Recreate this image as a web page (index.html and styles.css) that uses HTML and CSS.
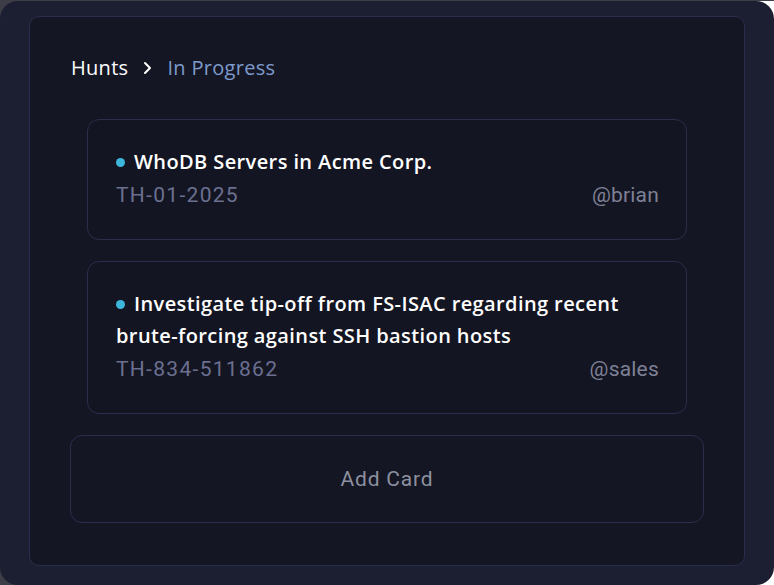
FILE: index.html
```html
<!DOCTYPE html>
<html lang="en">
<head>
<meta charset="utf-8">
<title>Hunts - In Progress</title>
<link rel="stylesheet" href="styles.css">
</head>
<body>
<div class="frame">
  <section class="panel">
    <nav class="crumbs">
      <span class="crumb-root">Hunts</span>
      <svg class="chev" width="10" height="14" viewBox="0 0 10 14" aria-hidden="true"><path d="M3 2 L8 7 L3 12" fill="none" stroke="#ffffff" stroke-width="2" stroke-linecap="round" stroke-linejoin="round"/></svg>
      <span class="crumb-current">In Progress</span>
    </nav>
    <div class="cards">
      <article class="card">
        <div class="card-title"><span class="dot"></span>WhoDB Servers in Acme Corp.</div>
        <div class="card-meta"><span class="id">TH-01-2025</span><span class="owner">@brian</span></div>
      </article>
      <article class="card">
        <div class="card-title"><span class="dot"></span>Investigate tip-off from FS-ISAC regarding recent brute-forcing against SSH bastion hosts</div>
        <div class="card-meta"><span class="id">TH-834-511862</span><span class="owner">@sales</span></div>
      </article>
    </div>
    <button class="add-card">Add Card</button>
  </section>
</div>
</body>
</html>
```
FILE: styles.css
```css
html, body {
  margin: 0;
  padding: 0;
}
body {
  width: 774px;
  height: 585px;
  background:
    linear-gradient(#3c3d46, #3c3d46) top left / 100% 1px no-repeat,
    linear-gradient(to right, #3c3d46 0%, #3c3d46 50%, #ffffff 50%, #ffffff 100%);
  overflow: hidden;
  font-family: "Open Sans", "Noto Sans", sans-serif;
}
.frame {
  margin-top: 1px;
  height: 584px;
  box-sizing: border-box;
  background: #1c1e31;
  border-radius: 18px;
  padding: 15px 29px 19px 29px;
  display: flex;
}
.panel {
  flex: 1;
  box-sizing: border-box;
  background: #151624;
  border: 1px solid #2b2d4d;
  border-radius: 10px;
  padding: 36px 40px 42px 40px;
  display: flex;
  flex-direction: column;
}
.crumbs {
  display: flex;
  align-items: center;
  height: 30px;
  padding-left: 1px;
  font-size: 20px;
  font-weight: 500;
  letter-spacing: 0.3px;
}
.crumb-root {
  color: #ffffff;
}
.chev {
  margin: 0 15px 0 14px;
}
.crumb-current {
  color: #7d9bcc;
}
.cards {
  margin-top: 36px;
  display: flex;
  flex-direction: column;
  gap: 21px;
  padding: 0 17px;
}
.card {
  background: #141522;
  border: 1px solid #2c2d4c;
  border-radius: 12px;
  padding: 26px 27px 29px 28px;
}
.card-title {
  color: #ffffff;
  font-size: 20px;
  font-weight: 600;
  letter-spacing: 0.4px;
  line-height: 32px;
}
.dot {
  display: inline-block;
  width: 9px;
  height: 9px;
  border-radius: 50%;
  background: #3db6dc;
  margin-right: 9px;
  vertical-align: 2px;
}
.card-meta {
  margin-top: 2px;
  display: flex;
  justify-content: space-between;
  line-height: 30px;
  font-family: "Roboto", "Liberation Sans", sans-serif;
  font-size: 21px;
}
.id {
  color: #6b7090;
  letter-spacing: 1.3px;
}
.owner {
  color: #7e8196;
  letter-spacing: 0.2px;
}
.add-card {
  margin-top: 21px;
  height: 89px;
  width: 100%;
  background: #151624;
  border: 1px solid #2c2d4c;
  border-radius: 12px;
  color: #8c909f;
  font-family: "Roboto", "Liberation Sans", sans-serif;
  font-size: 21px;
  letter-spacing: 0.8px;
  cursor: pointer;
}
```
